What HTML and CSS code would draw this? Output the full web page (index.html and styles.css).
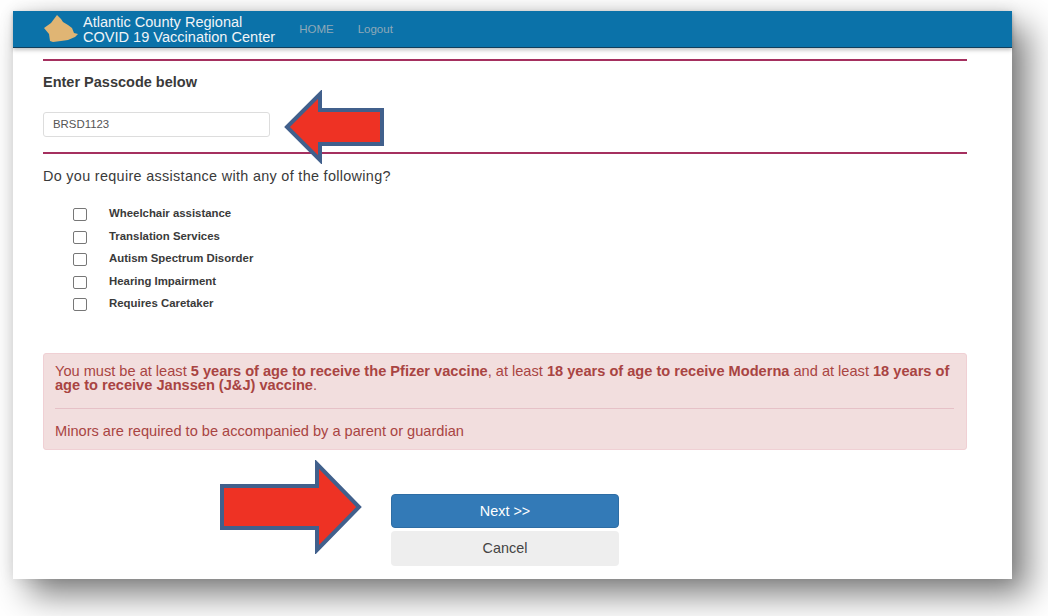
FILE: index.html
```html
<!DOCTYPE html>
<html lang="en">
<head>
    <meta charset="UTF-8">
    <meta name="viewport" content="width=device-width, initial-scale=1.0">
    <title>COVID 19 Vaccination Center</title>
    <link rel="stylesheet" href="styles.css">
</head>
<body>
    <div class="window">
        <div class="navbar">
            <svg class="logo" viewBox="0 0 36 30" width="36" height="30">
                <path d="M0 14 L7 9 L13 1 L17 5 L19 8 L24 11 L28 14 L30 19 L34 20 L31 23 L24 26 L17 27 L9 28 L6 27 L5 20 Z" fill="#e0b574"/>
            </svg>
            <div class="brand">Atlantic County Regional<br>COVID 19 Vaccination Center</div>
            <a class="nav-link" href="#">HOME</a>
            <a class="nav-link" href="#">Logout</a>
        </div>

        <div class="content">
            <hr class="rule">
            <h4 class="passcode-title">Enter Passcode below</h4>
            <input class="passcode" type="text" value="BRSD1123">
            <hr class="rule rule-second">
            <p class="question">Do you require assistance with any of the following?</p>

            <ul class="options">
                <li><span class="box"></span><span>Wheelchair assistance</span></li>
                <li><span class="box"></span><span>Translation Services</span></li>
                <li><span class="box"></span><span>Autism Spectrum Disorder</span></li>
                <li><span class="box"></span><span>Hearing Impairment</span></li>
                <li><span class="box"></span><span>Requires Caretaker</span></li>
            </ul>

            <div class="alert">
                <p>You must be at least <b>5 years of age to receive the Pfizer vaccine</b>, at least <b>18 years of age to receive Moderna</b> and at least <b>18 years of age to receive Janssen (J&amp;J) vaccine</b>.</p>
                <hr>
                <p>Minors are required to be accompanied by a parent or guardian</p>
            </div>

            <div class="buttons">
                <button class="btn btn-next">Next &gt;&gt;</button>
                <button class="btn btn-cancel">Cancel</button>
            </div>
        </div>

        <!-- callout arrows pasted over the screenshot -->
        <svg class="arrow arrow-left" viewBox="0 0 102 74" width="102" height="74">
            <path d="M3 37 L36 4 L36 20 L98 20 L98 54 L36 54 L36 70 Z" fill="#ee3224" stroke="#41608c" stroke-width="4"/>
        </svg>
        <svg class="arrow arrow-right" viewBox="0 0 144 94" width="144" height="94">
            <path d="M3 26 L98 26 L98 4 L140 47 L98 90 L98 68 L3 68 Z" fill="#ee3224" stroke="#41608c" stroke-width="4"/>
        </svg>
    </div>
</body>
</html>
```

FILE: styles.css
```css
* {
    box-sizing: border-box;
}

body {
    margin: 0;
    height: 616px;
    overflow: hidden;
    background-color: white;
    font-family: "Liberation Sans", Arial, sans-serif;
    color: #3a3a3a;
}

.window {
    position: relative;
    margin: 11px 0 0 13px;
    width: 999px;
    height: 568px;
    background-color: white;
    box-shadow: 16px 16px 32px rgba(0, 0, 0, 0.5), 0 0 14px rgba(0, 0, 0, 0.1);
}

.navbar {
    display: flex;
    align-items: center;
    height: 37px;
    padding-left: 31px;
    background-color: #0b72a9;
    border-bottom: 1px solid #123f5c;
    box-shadow: 0 2px 4px rgba(0, 0, 0, 0.25);
}

.logo {
    flex: none;
}

.brand {
    margin: 1px 0 0 3px;
    font-size: 14.55px;
    line-height: 15px;
    color: #f0f4f7;
}

.nav-link {
    margin-left: 24px;
    font-size: 11.5px;
    color: #8fa9b8;
    text-decoration: none;
}

.content {
    padding: 11px 45px 0 30px;
}

.rule {
    margin: 0;
    border: 0;
    height: 2px;
    background-color: #a5305f;
}

.passcode-title {
    margin: 13px 0 0;
    font-size: 14.5px;
    line-height: 16px;
    font-weight: bold;
}

.passcode {
    display: block;
    margin-top: 22px;
    width: 227px;
    height: 25px;
    padding: 0 9px 2px;
    font-family: inherit;
    font-size: 11.4px;
    color: #555;
    border: 1px solid #ddd;
    border-radius: 3px;
}

.rule-second {
    margin-top: 15px;
}

.question {
    margin: 14px 0 0;
    font-size: 14.4px;
    letter-spacing: 0.32px;
    line-height: 16px;
}

.options {
    list-style: none;
    margin: 18px 0 0;
    padding: 0 0 0 30px;
}

.options li {
    display: flex;
    align-items: center;
    height: 22.5px;
    font-size: 11.4px;
    font-weight: bold;
}

.box {
    flex: none;
    width: 14px;
    height: 13px;
    margin: 3px 22px 0 0;
    border: 1px solid #777;
    border-radius: 2px;
}

.alert {
    margin-top: 38px;
    height: 97px;
    padding: 10px 12px 0 11px;
    font-size: 14.6px;
    line-height: 14.7px;
    color: #a94442;
    background-color: #f2dede;
    border: 1px solid #f0d0d4;
    border-radius: 3px;
}

.alert p {
    margin: 0;
}

.alert hr {
    margin: 15px 0;
    border: 0;
    height: 1px;
    background-color: #e6c1c7;
}

.buttons {
    display: flex;
    flex-direction: column;
    gap: 3px;
    width: 228px;
    margin: 44px 0 0 348px;
}

.btn {
    height: 34.5px;
    font-family: inherit;
    font-size: 14.4px;
    border: 0;
    border-radius: 4px;
}

.btn-next {
    color: #fff;
    background-color: #337ab7;
    border: 1px solid #2e6da4;
}

.btn-cancel {
    color: #444;
    background-color: #eee;
}

.arrow {
    position: absolute;
}

.arrow-left {
    left: 271px;
    top: 79px;
}

.arrow-right {
    left: 206px;
    top: 449px;
}
```
